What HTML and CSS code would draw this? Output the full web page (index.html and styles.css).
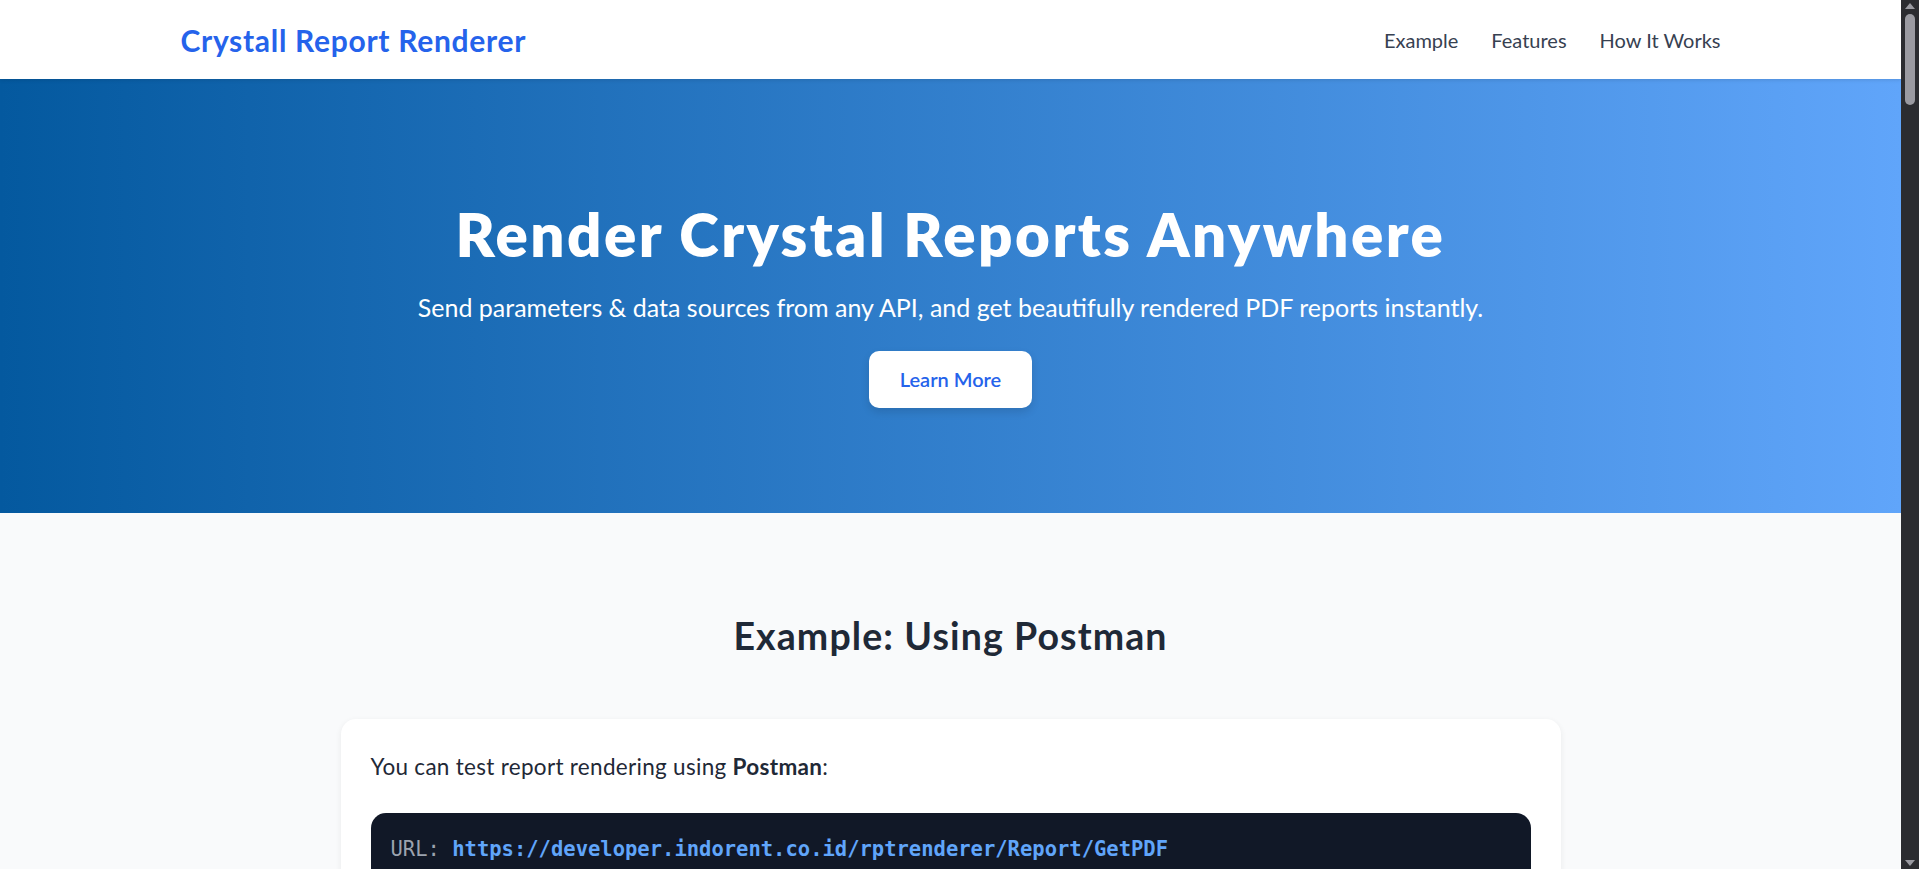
FILE: index.html
```html
<!DOCTYPE html>
<html lang="en">
<head>
    <meta charset="UTF-8">
    <meta name="viewport" content="width=device-width, initial-scale=1.0">
    <title>Crystall Report Renderer</title>
    <link rel="stylesheet" href="styles.css">
</head>
<body>

<!-- Navigation -->
<nav class="navbar">
    <div class="nav-inner">
        <a href="#" class="logo">Crystall Report Renderer</a>
        <div class="nav-links">
            <a href="#example">Example</a>
            <a href="#features">Features</a>
            <a href="#how-it-works">How It Works</a>
        </div>
    </div>
</nav>

<!-- Hero -->
<header class="hero">
    <h1>Render Crystal Reports Anywhere</h1>
    <p>Send parameters &amp; data sources from any API, and get beautifully rendered PDF reports instantly.</p>
    <a href="#example" class="btn-light">Learn More</a>
</header>

<!-- Example with Postman -->
<section id="example" class="section section-gray">
    <div class="section-inner">
        <h2>Example: Using Postman</h2>
        <div class="card">
            <p>You can test report rendering using <strong>Postman</strong>:</p>
            <pre class="code"><span class="code-key">URL:</span> <span class="code-url">https://developer.indorent.co.id/rptrenderer/Report/GetPDF</span>
<span class="code-key">Method:</span> POST
<span class="code-key">Headers:</span>
  Content-Type: application/json
<span class="code-key">Body (raw JSON):</span>
{
  "reportName": "InvoiceReport.rpt",
  "parameters": {
    "InvoiceNo": "INV-2024-0001"
  },
  "dataSources": [
    { "name": "Invoice", "url": "https://api.example.com/invoice/1" }
  ]
}</pre>
            <p class="hint">The response is the rendered report as a PDF file.</p>
        </div>
    </div>
</section>

<!-- Features -->
<section id="features" class="section">
    <div class="section-inner">
        <h2>Features</h2>
        <div class="feature-grid">
            <div class="feature">
                <h3>Any Data Source</h3>
                <p>Pass JSON data from any REST API straight into your report.</p>
            </div>
            <div class="feature">
                <h3>Parameters</h3>
                <p>Fill report parameters directly from the request body.</p>
            </div>
            <div class="feature">
                <h3>Instant PDF</h3>
                <p>Get a ready-to-print PDF back in a single call.</p>
            </div>
        </div>
    </div>
</section>

<!-- How it works -->
<section id="how-it-works" class="section section-gray">
    <div class="section-inner">
        <h2>How It Works</h2>
        <ol class="steps">
            <li>Upload your .rpt file to the server.</li>
            <li>Send a POST request with parameters and data sources.</li>
            <li>Receive the rendered PDF.</li>
        </ol>
    </div>
</section>

<footer class="footer">
    &copy; 2024 Crystall Report Renderer
</footer>

<!-- dark scroll rail on the right -->
<div class="scroll-rail" aria-hidden="true">
    <svg class="rail-arrow rail-up" width="10" height="6" viewBox="0 0 10 6"><path d="M5 0 L10 6 L0 6 Z" fill="#9a9aa1"/></svg>
    <div class="rail-thumb"></div>
    <svg class="rail-arrow rail-down" width="10" height="6" viewBox="0 0 10 6"><path d="M0 0 L10 0 L5 6 Z" fill="#9a9aa1"/></svg>
</div>

</body>
</html>
```

FILE: styles.css
```css
* {
    box-sizing: border-box;
}

body {
    font-family: "Segoe UI", Lato, "Noto Sans", sans-serif;
    margin: 0;
    padding: 0 18px 0 0;
    color: #1f2937;
    background-color: #fff;
}

a {
    text-decoration: none;
}

/* Scroll rail */
.scroll-rail {
    position: fixed;
    top: 0;
    right: 0;
    width: 18px;
    height: 100vh;
    background-color: #2b2c30;
    z-index: 100;
}

.rail-arrow {
    position: absolute;
    left: 4px;
}

.rail-up {
    top: 3px;
}

.rail-down {
    bottom: 3px;
}

.rail-thumb {
    position: absolute;
    top: 14px;
    left: 4px;
    width: 10px;
    height: 91px;
    background-color: #9a9aa1;
    border-radius: 5px;
}

/* Navigation */
.navbar {
    position: sticky;
    top: 0;
    z-index: 50;
    background: #fff;
    box-shadow: 0 1px 4px rgba(0, 0, 0, 0.12);
}

.nav-inner {
    max-width: 1600px;
    margin: 0 auto;
    padding: 0 30px;
    height: 79px;
    display: flex;
    align-items: center;
    justify-content: space-between;
}

.logo {
    font-size: 30px;
    font-weight: 700;
    letter-spacing: 0.7px;
    color: #2563eb;
}

.nav-links {
    display: flex;
    gap: 33px;
}

.nav-links a {
    font-size: 20px;
    color: #374151;
}

.nav-links a:hover {
    color: #2563eb;
}

/* Hero */
.hero {
    background: linear-gradient(to right, #04599f, #60a5fa);
    color: #fff;
    text-align: center;
    padding: 125px 24px 105px;
    display: flex;
    flex-direction: column;
    align-items: center;
}

.hero h1 {
    font-size: 60px;
    font-weight: 800;
    letter-spacing: 2.5px;
    line-height: 1;
    margin: 0 0 26px;
}

.hero p {
    font-size: 25px;
    line-height: 35px;
    margin: 0 0 26px;
}

.btn-light {
    display: inline-block;
    background: #fff;
    color: #2563eb;
    font-size: 20px;
    font-weight: 600;
    line-height: 28px;
    padding: 14px 31px 15px;
    border-radius: 10px;
    box-shadow: 0 4px 8px rgba(0, 0, 0, 0.12);
}

/* Sections */
.section {
    padding: 100px 0;
}

.section-gray {
    background-color: #f9fafb;
}

.section-inner {
    max-width: 1280px;
    margin: 0 auto;
    padding: 0 30px;
}

.section h2 {
    font-size: 37.5px;
    font-weight: 700;
    letter-spacing: 1.1px;
    line-height: 45px;
    text-align: center;
    margin: 0 0 61px;
}

.card {
    background: #fff;
    border-radius: 15px;
    padding: 30px;
    box-shadow: 0 2px 6px rgba(0, 0, 0, 0.07);
}

.card p {
    font-size: 22.5px;
    letter-spacing: 0.3px;
    line-height: 35px;
    margin: 0 0 29px;
}

.card .hint {
    margin: 29px 0 0;
    color: #4b5563;
}

.code {
    background: #111827;
    color: #e5e7eb;
    border-radius: 15px;
    padding: 20px;
    margin: 0;
    font-family: "DejaVu Sans Mono", "Liberation Mono", monospace;
    font-size: 20.5px;
    line-height: 32px;
    overflow-x: auto;
}

.code-key {
    color: #9ca3af;
}

.code-url {
    color: #60a5fa;
    font-weight: 700;
}

/* Features */
.feature-grid {
    display: grid;
    grid-template-columns: repeat(3, 1fr);
    gap: 30px;
}

.feature {
    background: #fff;
    border-radius: 15px;
    padding: 30px;
    box-shadow: 0 2px 6px rgba(0, 0, 0, 0.07);
}

.feature h3 {
    font-size: 25px;
    margin: 0 0 12px;
    color: #2563eb;
}

.feature p {
    font-size: 20px;
    line-height: 30px;
    margin: 0;
    color: #4b5563;
}

.steps {
    font-size: 22.5px;
    line-height: 40px;
    max-width: 900px;
    margin: 0 auto;
}

.footer {
    background: #111827;
    color: #9ca3af;
    text-align: center;
    padding: 30px;
    font-size: 18px;
}
```
